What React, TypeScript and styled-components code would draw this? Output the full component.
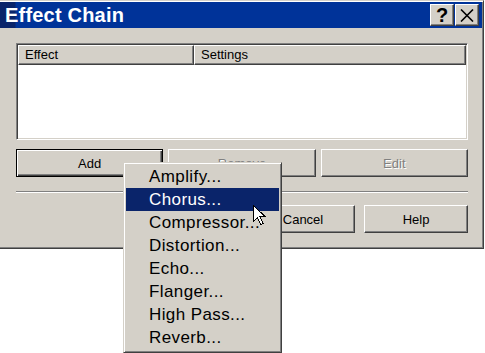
import { FC } from 'react';
import styled, { createGlobalStyle, css } from 'styled-components';

const GlobalStyle = createGlobalStyle`
  html, body {
    margin: 0;
    padding: 0;
    background: #fff;
    overflow: hidden;
  }
  body {
    font-family: 'Liberation Sans', Arial, sans-serif;
    font-size: 13px;
    color: #000;
  }
`;

const raised = css`
  border: 1px solid;
  border-color: #fff #404040 #404040 #fff;
  box-shadow: inset -1px -1px #808080, inset 1px 1px #d4d0c8;
`;

const Page = styled.div`
  position: relative;
  width: 485px;
  height: 353px;
  overflow: hidden;
`;

const Window = styled.div`
  box-sizing: border-box;
  margin-left: -2px;
  width: 486px;
  height: 249px;
  padding: 1px;
  background: #d4d0c8;
  border: 1px solid;
  border-color: #d4d0c8 #404040 #404040 #d4d0c8;
  box-shadow: inset 1px 1px #fff, inset -1px -1px #808080;
  display: flex;
  flex-direction: column;
`;

const TitleBar = styled.div`
  height: 26px;
  display: flex;
  align-items: center;
  justify-content: space-between;
  padding: 0 3px 0 5px;
  background: linear-gradient(to right, #0a246a 0, #0a246a 15px, #003399 16px);
`;

const Title = styled.span`
  color: #fff;
  font-weight: bold;
  font-size: 20px;
  letter-spacing: 0.2px;
`;

const CaptionButtons = styled.div`
  display: flex;
  gap: 1px;
`;

const CaptionButton = styled.div`
  box-sizing: border-box;
  width: 24px;
  height: 22px;
  background: #d4d0c8;
  ${raised};
  display: flex;
  align-items: center;
  justify-content: center;
  font-weight: bold;
  font-size: 20px;
  line-height: 1;
`;

const Body = styled.div`
  padding: 15px 14px 0 16px;
  display: flex;
  flex-direction: column;
`;

const ListView = styled.div`
  box-sizing: border-box;
  height: 97px;
  background: #fff;
  border: 1px solid;
  border-color: #808080 #fff #fff #808080;
  box-shadow: inset 1px 1px #404040, inset -1px -1px #d4d0c8;
  padding: 1px;
`;

const Header = styled.div`
  display: grid;
  grid-template-columns: 176px 1fr;
  height: 20px;
`;

const HeaderCell = styled.div`
  box-sizing: border-box;
  background: #d4d0c8;
  ${raised};
  padding-left: 6px;
  line-height: 17px;
`;

const ButtonRow = styled.div`
  margin-top: 9px;
  display: grid;
  grid-template-columns: repeat(3, 1fr);
  gap: 5px;
`;

const Button = styled.div<{ $default?: boolean; $disabled?: boolean; $width?: number }>`
  box-sizing: border-box;
  height: 28px;
  ${(p) => (p.$width ? `width: ${p.$width}px;` : '')}
  background: #d4d0c8;
  display: flex;
  align-items: center;
  justify-content: center;
  font-size: 13px;
  ${(p) =>
    p.$default
      ? css`
          border: 1px solid #000;
          box-shadow: inset 1px 1px #fff, inset -1px -1px #404040,
            inset -2px -2px #808080;
        `
      : raised}
  ${(p) =>
    p.$disabled
      ? css`
          color: #808080;
          text-shadow: 1px 1px #fff;
        `
      : ''}
`;

const Separator = styled.div`
  margin-top: 14px;
  height: 0;
  border-top: 1px solid #808080;
  border-bottom: 1px solid #fff;
`;

const Footer = styled.div`
  margin-top: 12px;
  display: flex;
  justify-content: flex-end;
  gap: 9px;
`;

const Menu = styled.div`
  position: absolute;
  left: 123px;
  top: 162px;
  box-sizing: border-box;
  width: 159px;
  height: 191px;
  padding: 2px;
  background: #d4d0c8;
  border: 1px solid;
  border-color: #d4d0c8 #404040 #404040 #d4d0c8;
  box-shadow: inset 1px 1px #fff, inset -1px -1px #808080;
`;

const MenuItem = styled.div<{ $active?: boolean }>`
  height: 23px;
  line-height: 23px;
  padding-left: 23px;
  font-size: 17px;
  letter-spacing: 0.4px;
  white-space: nowrap;
  background: ${(p) => (p.$active ? '#0a246a' : 'transparent')};
  color: ${(p) => (p.$active ? '#fff' : '#000')};
`;

const Cursor = styled.svg`
  position: absolute;
  left: 253px;
  top: 205px;
`;

const effects = [
  'Amplify...',
  'Chorus...',
  'Compressor...',
  'Distortion...',
  'Echo...',
  'Flanger...',
  'High Pass...',
  'Reverb...',
];

const App: FC = () => (
  <Page>
    <GlobalStyle />
    <Window>
      <TitleBar>
        <Title>Effect Chain</Title>
        <CaptionButtons>
          <CaptionButton>?</CaptionButton>
          <CaptionButton>
            <svg width="14" height="13" viewBox="0 0 14 13">
              <path d="M1 0.5 L13 12.5 M13 0.5 L1 12.5" stroke="#000" strokeWidth="1.6" />
            </svg>
          </CaptionButton>
        </CaptionButtons>
      </TitleBar>
      <Body>
        <ListView>
          <Header>
            <HeaderCell>Effect</HeaderCell>
            <HeaderCell>Settings</HeaderCell>
          </Header>
        </ListView>
        <ButtonRow>
          <Button $default>Add</Button>
          <Button $disabled>Remove</Button>
          <Button $disabled>Edit</Button>
        </ButtonRow>
        <Separator />
        <Footer>
          {/* OK sits under the open menu, so its label never shows */}
          <Button $width={104} />
          <Button $width={104}>Cancel</Button>
          <Button $width={104}>Help</Button>
        </Footer>
      </Body>
    </Window>
    <Menu>
      {effects.map((e) => (
        <MenuItem key={e} $active={e === 'Chorus...'}>
          {e}
        </MenuItem>
      ))}
    </Menu>
    <Cursor width="13" height="21" viewBox="0 0 13 21">
      <path
        d="M0.5 0.5 L0.5 16.5 L4.5 12.5 L7.5 19.5 L10 18.5 L7 11.5 L12 11.5 Z"
        fill="#fff"
        stroke="#000"
        strokeWidth="1"
        shapeRendering="crispEdges"
      />
    </Cursor>
  </Page>
);

export default App;
